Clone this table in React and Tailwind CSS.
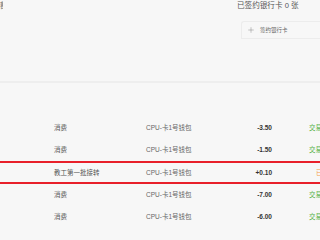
import React from 'react';
import { Plus } from 'lucide-react';

const rows = [
  { type: '消费', wallet: 'CPU-卡1号钱包', amount: '-3.50', status: '交易成功', ok: true },
  { type: '消费', wallet: 'CPU-卡1号钱包', amount: '-1.50', status: '交易成功', ok: true },
  { type: '教工第一批接转', wallet: 'CPU-卡1号钱包', amount: '+0.10', status: '已入账', ok: false, hl: true },
  { type: '消费', wallet: 'CPU-卡1号钱包', amount: '-7.00', status: '交易成功', ok: true },
  { type: '消费', wallet: 'CPU-卡1号钱包', amount: '-6.00', status: '交易成功', ok: true },
];

const Row = ({ r }) => (
  <div
    className={`flex items-center text-[6.5px] ${
      r.hl ? 'h-[23px] border-y-2 border-[#e8202a]' : 'h-[22px]'
    }`}
  >
    <div className="w-[146px] shrink-0 pl-[54px] text-[#555] whitespace-nowrap">{r.type}</div>
    <div className="w-[90px] shrink-0 text-[#666] whitespace-nowrap">{r.wallet}</div>
    <div className="w-[36px] shrink-0 text-right font-bold text-[#333]">{r.amount}</div>
    <div
      className={`shrink-0 whitespace-nowrap ${
        r.ok ? 'pl-[37px] text-[#52b043]' : 'pl-[44px] text-[#f5a04a]'
      }`}
    >
      {r.status}
    </div>
  </div>
);

export default function App() {
  return (
    <div
      className="w-[320px] h-[240px] bg-[#f7f7f7] overflow-hidden"
      style={{ fontFamily: '"Liberation Sans", "Noto Sans CJK SC", sans-serif' }}
    >
      {/* header */}
      <div className="h-[81px] flex justify-between">
        <div className="w-[3px] overflow-hidden pt-[1px]">
          <div className="flex justify-end w-[3px] text-[8px] leading-[10px] text-[#777]">
            <span className="-mr-[5px]">额</span>
          </div>
        </div>
        <div className="w-[83px] pt-[1px]">
          <div className="text-[7.6px] leading-[10px] text-[#555] whitespace-nowrap">已签约银行卡 0 张</div>
          <div className="mt-[10px] ml-[4px] h-[18px] rounded-tl-[3px] border-l border-t border-[#ececec] border-b flex items-center gap-[5px] pl-[5px]">
            <Plus className="w-[8px] h-[8px] text-[#888]" strokeWidth={1.5} />
            <span className="text-[5.5px] text-[#666] whitespace-nowrap">签约银行卡</span>
          </div>
        </div>
      </div>
      <div className="h-[2px] bg-[#eeeeee]" />

      {/* records */}
      <div className="pt-[34px]">
        {rows.map((r, i) => (
          <Row key={i} r={r} />
        ))}
      </div>
    </div>
  );
}
